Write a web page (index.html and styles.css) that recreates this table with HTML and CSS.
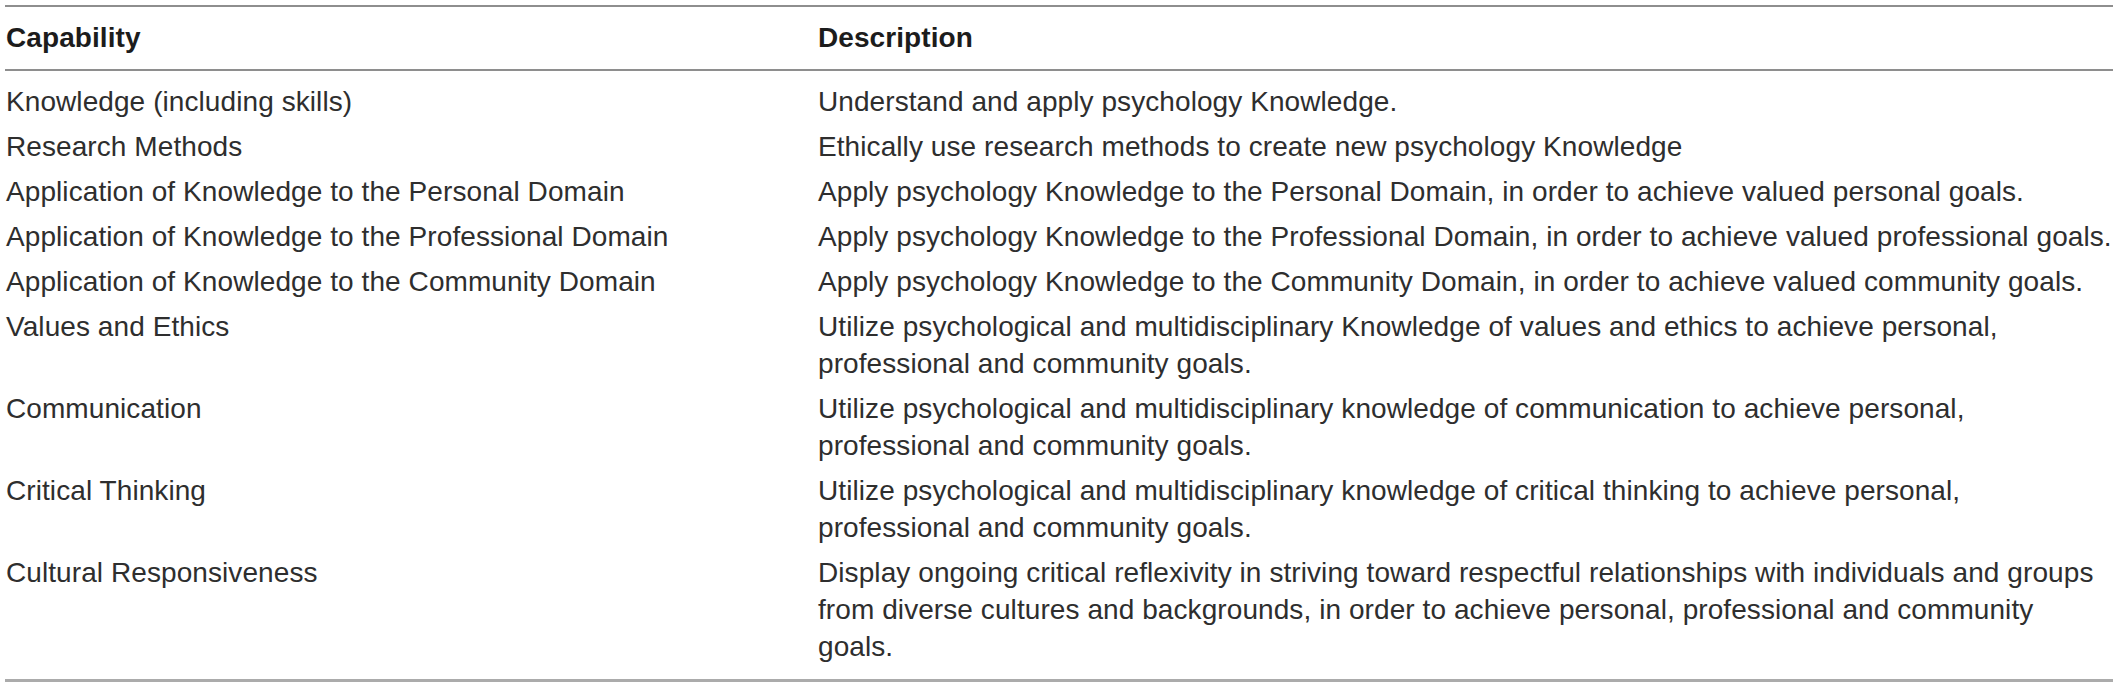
FILE: index.html
```html
<!DOCTYPE html>
<html lang="en">
<head>
<meta charset="utf-8">
<title>Capabilities</title>
<link rel="stylesheet" href="styles.css">
</head>
<body>
<div class="wrap">
<table class="cap-table">
  <thead>
    <tr>
      <th class="col-cap">Capability</th>
      <th class="col-desc">Description</th>
    </tr>
  </thead>
  <tbody>
    <tr class="first"><td>Knowledge (including skills)</td><td>Understand and apply psychology Knowledge.</td></tr>
    <tr><td>Research Methods</td><td>Ethically use research methods to create new psychology Knowledge</td></tr>
    <tr><td>Application of Knowledge to the Personal Domain</td><td>Apply psychology Knowledge to the Personal Domain, in order to achieve valued personal goals.</td></tr>
    <tr><td>Application of Knowledge to the Professional Domain</td><td>Apply psychology Knowledge to the Professional Domain, in order to achieve valued professional goals.</td></tr>
    <tr><td>Application of Knowledge to the Community Domain</td><td>Apply psychology Knowledge to the Community Domain, in order to achieve valued community goals.</td></tr>
    <tr><td>Values and Ethics</td><td>Utilize psychological and multidisciplinary Knowledge of values and ethics to achieve personal,<br>professional and community goals.</td></tr>
    <tr><td>Communication</td><td>Utilize psychological and multidisciplinary knowledge of communication to achieve personal,<br>professional and community goals.</td></tr>
    <tr><td>Critical Thinking</td><td>Utilize psychological and multidisciplinary knowledge of critical thinking to achieve personal,<br>professional and community goals.</td></tr>
    <tr class="last"><td>Cultural Responsiveness</td><td>Display ongoing critical reflexivity in striving toward respectful relationships with individuals and groups<br>from diverse cultures and backgrounds, in order to achieve personal, professional and community<br>goals.</td></tr>
  </tbody>
</table>
</div>
</body>
</html>
```
FILE: styles.css
```css
html, body {
  margin: 0;
  padding: 0;
  background: #ffffff;
}

.wrap {
  padding: 5px 5px 0 5px;
}

.cap-table {
  width: 2108px;
  border-collapse: collapse;
  font-family: "Liberation Sans", Arial, sans-serif;
  font-size: 28px;
  line-height: 37px;
  letter-spacing: 0.08px;
  color: #2e2e2e;
}

.cap-table th,
.cap-table td {
  text-align: left;
  vertical-align: top;
  padding: 4px 0 4px 1px;
  white-space: nowrap;
}

.cap-table thead tr {
  border-top: 2px solid #8e8e8e;
  border-bottom: 2px solid #8e8e8e;
}

.cap-table th {
  font-weight: bold;
  color: #1c1c1c;
  padding-top: 12px;
  padding-bottom: 13px;
}

.col-cap {
  width: 811px;
}

.cap-table tbody tr.first td {
  padding-top: 12px;
}

.cap-table tbody tr.last td {
  padding-bottom: 14px;
}

.cap-table tbody {
  border-bottom: 3px solid #ababab;
}
```
